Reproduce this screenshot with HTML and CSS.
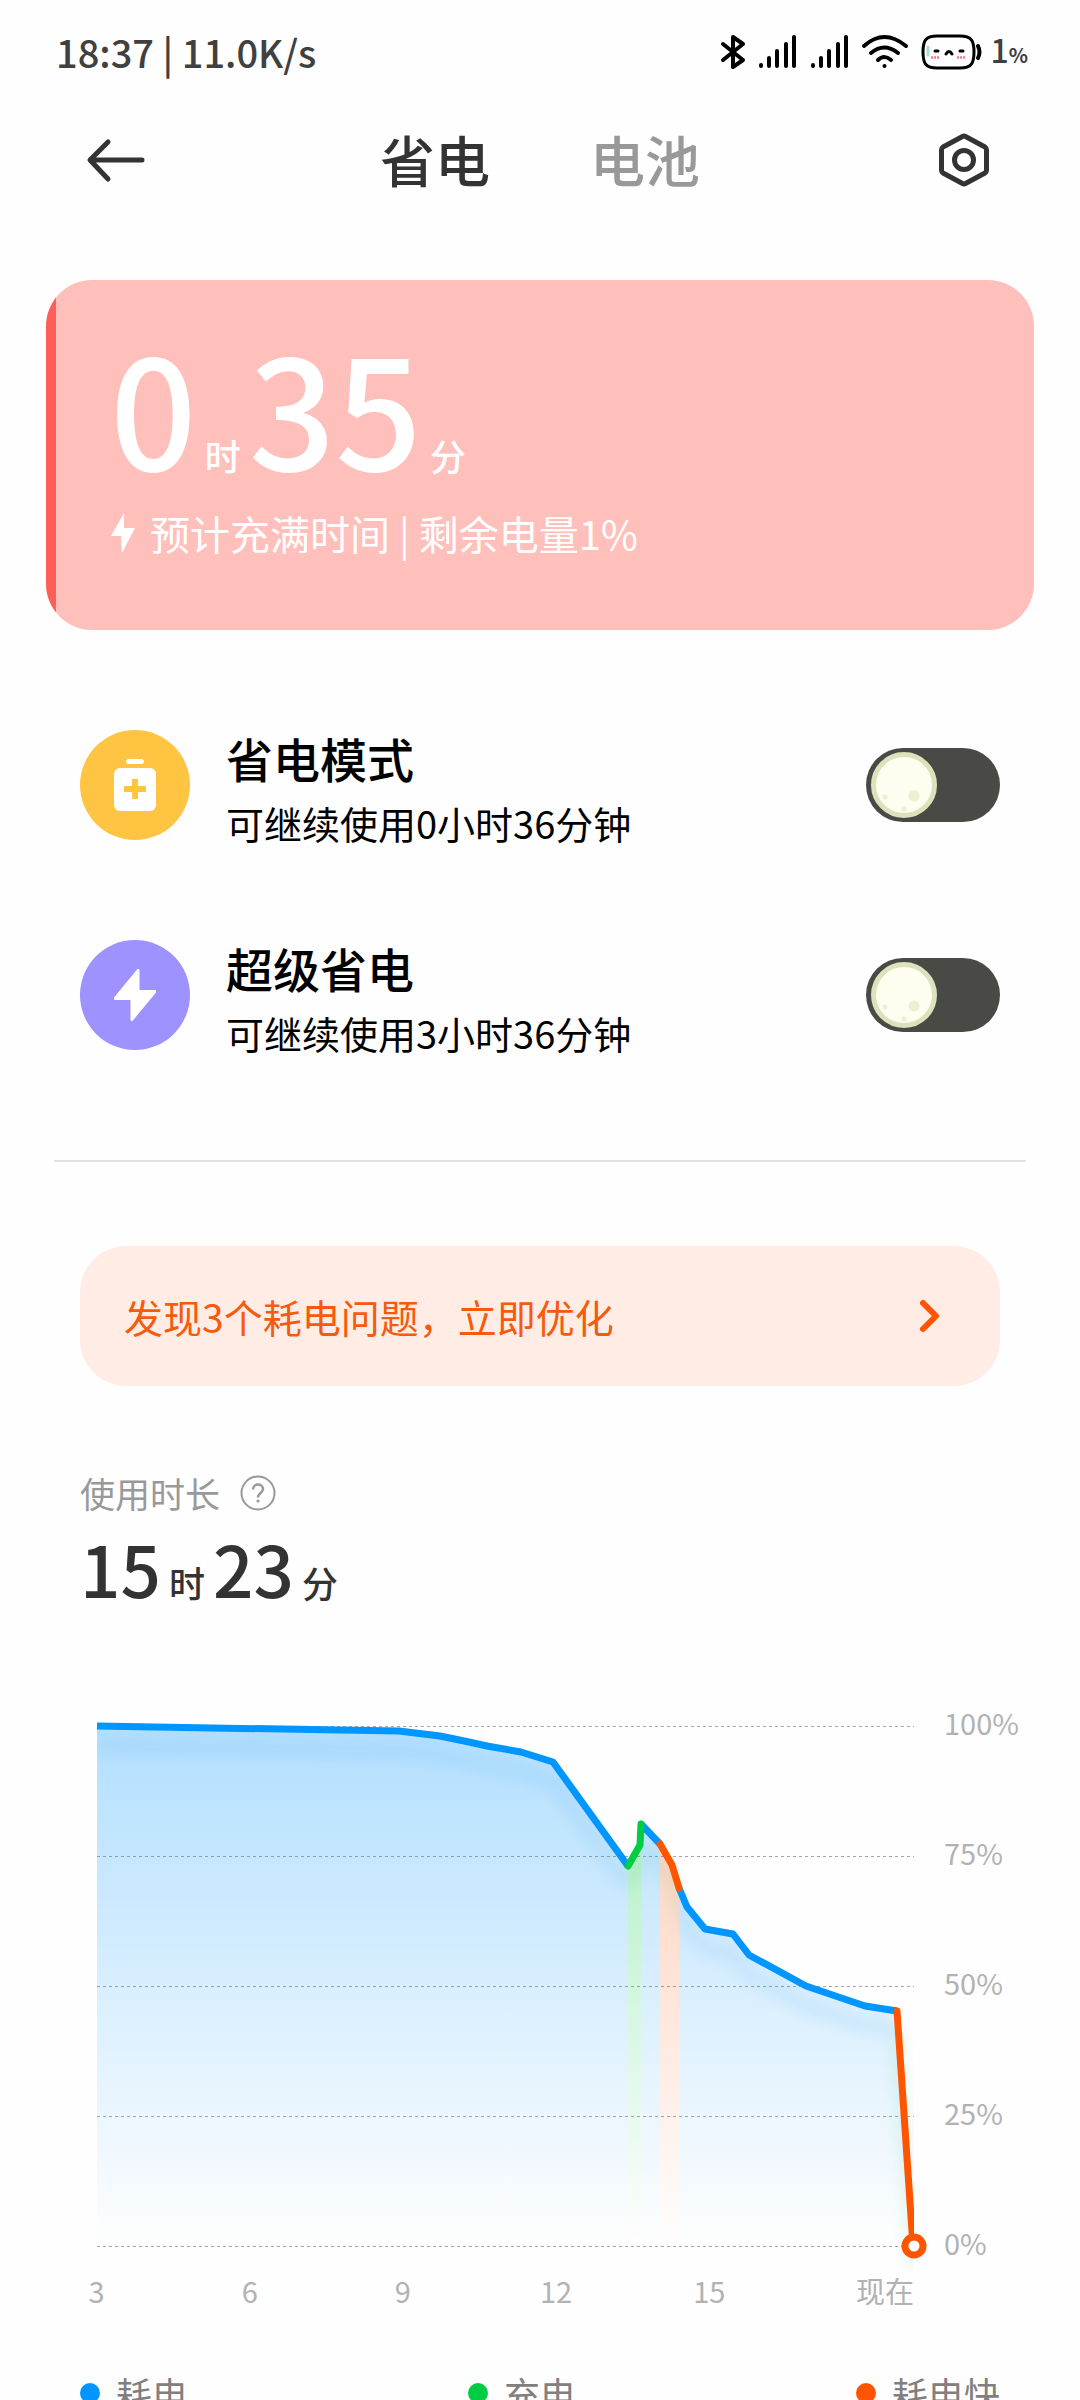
FILE: index.html
```html
<!DOCTYPE html>
<html lang="zh-CN">
<head>
<meta charset="utf-8">
<meta name="viewport" content="width=device-width, initial-scale=1">
<title>省电</title>
<link rel="stylesheet" href="styles.css">
</head>
<body>
<div class="screen">
  <div class="status">
    <span class="status-text">18:37 | 11.0K/s</span>
    <div class="status-icons">
      <svg width="26" height="36" viewBox="0 0 26 36" fill="none" stroke="#000" stroke-width="4" stroke-linecap="round" stroke-linejoin="round"><path d="M3 10 23 26 13 33V3L23 10 3 26"/></svg>
      <svg width="40" height="36" viewBox="0 0 40 36" stroke="#000" stroke-width="4" stroke-linecap="round"><path d="M3 31v1M11 24v8M19 17v15M28 10v22M36 3v29"/></svg>
      <svg width="40" height="36" viewBox="0 0 40 36" stroke="#000" stroke-width="4" stroke-linecap="round"><path d="M3 31v1M11 24v8M19 17v15M28 10v22M36 3v29"/></svg>
      <svg width="48" height="36" viewBox="0 0 48 36" fill="none" stroke="#000" stroke-width="4" stroke-linecap="round"><path d="M2 12Q22-6 44 12M9 19Q22 8 36 19M16 26Q22 20 29 26"/><circle cx="22.500" cy="32" r="2" fill="#000" stroke="none"/></svg>
      <div class="status-battery">
        <svg width="60" height="36" viewBox="0 0 60 36" fill="none" stroke="#000" stroke-linecap="round">
          <path d="M15 2H38C49 2 52 6 52 18S49 34 38 34H15C4 34 1 30 1 18S4 2 15 2Z" stroke-width="3"/>
          <path d="M56 12Q59 18 56 24" stroke-width="4"/>
          <path d="M13 17h3M38 17h3M24 20Q27 15 30 20" stroke-width="3"/>
          <path d="M6 13v8" stroke="#a9dcd8" stroke-width="3"/>
          <path d="M10 23v1M13 23v1M16 23v1M36 23v1M39 23v1M42 23v1" stroke="#ee7f86" stroke-width="2"/>
        </svg>
        <span>1<small>%</small></span>
      </div>
    </div>
  </div>

  <header class="header">
    <button class="icon-button" type="button" aria-label="返回">
      <svg width="72" height="72" viewBox="0 0 72 72" fill="none" stroke="#333" stroke-width="5" stroke-linecap="round" stroke-linejoin="round"><path d="M62 36H11M28 18 10 36 28 55"/></svg>
    </button>
    <nav class="tabs">
      <a class="tab tab-active" href="#saver">省电</a>
      <a class="tab" href="#battery">电池</a>
    </nav>
    <button class="icon-button" type="button" aria-label="设置">
      <svg width="72" height="72" viewBox="0 0 72 72" fill="none" stroke="#333" stroke-width="5" stroke-linejoin="round"><path d="M34.500 12.500Q36 11.500 37.500 12.500L57 23Q58.500 24 58.500 26V46Q58.500 48 57 49L37.500 59.500Q36 60.500 34.500 59.500L15 49Q13.500 48 13.500 46V26Q13.500 24 15 23Z"/><circle cx="36" cy="36" r="9.500"/></svg>
    </button>
  </header>

  <main>
    <section class="charge">
      <p class="charge-time"><b>0</b><span>时</span><b>35</b><span>分</span></p>
      <p class="charge-note">
        <svg width="26" height="40" viewBox="0 0 26 40" fill="#fff"><path d="M14 0 1 23H11L12 40 25 15H14Z"/></svg>
        <span>预计充满时间 | 剩余电量1%</span>
      </p>
    </section>

    <section class="modes" id="saver">
      <div class="mode">
        <svg class="mode-icon" width="110" height="110" viewBox="0 0 110 110"><circle cx="55" cy="55" r="55" fill="#ffc542"/><rect x="46" y="29" width="18" height="5" rx="2.500" fill="#fff"/><rect x="34" y="38" width="42" height="43" rx="6" fill="#fff"/><path d="M55 49v20M44 59h22" stroke="#ffc542" stroke-width="6"/></svg>
        <label class="mode-text" for="mode-saver"><span class="mode-title">省电模式</span><span class="mode-note">可继续使用0小时36分钟</span></label>
        <input class="toggle" type="checkbox" role="switch" id="mode-saver">
      </div>
      <div class="mode">
        <svg class="mode-icon" width="110" height="110" viewBox="0 0 110 110"><circle cx="55" cy="55" r="55" fill="#9d92ff"/><path d="M58 30 35 58V59H51.500V80H52L75 52V51H58.500V30Z" fill="#fff" stroke="#fff" stroke-width="2" stroke-linejoin="round"/></svg>
        <label class="mode-text" for="mode-super"><span class="mode-title">超级省电</span><span class="mode-note">可继续使用3小时36分钟</span></label>
        <input class="toggle" type="checkbox" role="switch" id="mode-super">
      </div>
    </section>

    <hr class="divider">

    <button class="issues" type="button">
      <span>发现3个耗电问题，立即优化</span>
      <svg width="22" height="34" viewBox="0 0 22 34" fill="none" stroke="#ff5500" stroke-width="6" stroke-linecap="round" stroke-linejoin="round"><path d="M5 4 18 17 5 30"/></svg>
    </button>

    <section class="usage" id="battery">
      <h2 class="usage-label">使用时长
        <svg width="36" height="36" viewBox="0 0 36 36" fill="none" stroke="#999" stroke-width="2"><circle cx="18" cy="18" r="16.500"/><path d="M13 14.500C13 8 23 8 23 14 23 18 18 18 18 22.500" stroke-width="2.500"/><circle cx="18" cy="26" r="1.600" fill="#999" stroke="none"/></svg>
      </h2>
      <p class="usage-time"><b>15</b><span>时</span><b>23</b><span>分</span></p>
    </section>

    <figure class="chart">
      <div class="chart-body">
        <svg class="plot" viewBox="0 0 817 520" role="img" aria-label="电量变化">
          <defs>
            <linearGradient id="fade-blue" gradientUnits="userSpaceOnUse" x1="0" y1="0" x2="0" y2="520"><stop stop-color="#0096ff" stop-opacity=".3"/><stop offset="1" stop-color="#0096ff" stop-opacity="0"/></linearGradient>
            <linearGradient id="fade-green" gradientUnits="userSpaceOnUse" x1="0" y1="0" x2="0" y2="520"><stop stop-color="#00cc44" stop-opacity=".35"/><stop offset="1" stop-color="#00cc44" stop-opacity="0"/></linearGradient>
            <linearGradient id="fade-orange" gradientUnits="userSpaceOnUse" x1="0" y1="0" x2="0" y2="520"><stop stop-color="#ff5500" stop-opacity=".3"/><stop offset="1" stop-color="#ff5500" stop-opacity="0"/></linearGradient>
            <clipPath id="plot-clip"><rect x="0" y="-10" width="817" height="570"/></clipPath>
            <filter id="soft" filterUnits="userSpaceOnUse" x="-40" y="-40" width="900" height="640"><feGaussianBlur stdDeviation="7"/></filter>
          </defs>
          <path fill="url(#fade-blue)" d="M0 0 302 5 343 10 372 16 390 20 424 26 456 36 531 140V520H0ZM544 98 563 118V520H544ZM582 162 590 181 608 203 636 208 652 229 709 260 768 280 800 285 816 520H582Z"/>
          <path fill="url(#fade-green)" d="M531 140 543 119 544 98V520H531Z"/>
          <path fill="url(#fade-orange)" d="M563 118 575 139 582 162V520H563Z"/>
          <g clip-path="url(#plot-clip)" fill="none" stroke-linejoin="round">
            <g filter="url(#soft)" stroke-width="14" opacity=".08">
              <path stroke="#0080e0" d="M0 20 302 25 343 30 372 36 390 40 424 46 456 56 531 160M544 118 563 138M582 182 590 201 608 223 636 228 652 249 709 280 768 300 800 305"/>
              <path stroke="#00aa44" d="M531 160 543 139 544 118M563 138 575 159 582 182M800 305 816 540"/>
            </g>
            <path stroke="#777" stroke-opacity=".65" stroke-dasharray="3 3" d="M0 .5H817M0 130.500H817M0 260.500H817M0 390.500H817M0 520.500H817"/>
            <g stroke-width="7">
              <path stroke="#0096ff" d="M0 0 302 5 343 10 372 16 390 20 424 26 456 36 531 140M544 98 563 118M582 162 590 181 608 203 636 208 652 229 709 260 768 280 800 285"/>
              <path stroke="#00cc44" stroke-linecap="round" d="M531 140 543 119 544 98"/>
              <path stroke="#ff5500" stroke-linecap="round" d="M563 118 575 139 582 162M800 285 816 520"/>
            </g>
          </g>
          <circle cx="817" cy="520" r="9" fill="#fff" stroke="#ff5500" stroke-width="7"/>
        </svg>
        <ul class="levels"><li>100%</li><li>75%</li><li>50%</li><li>25%</li><li>0%</li></ul>
      </div>
      <ul class="hours"><li>3</li><li>6</li><li>9</li><li>12</li><li>15</li><li>现在</li></ul>
      <figcaption class="legend">
        <span class="key key-drain">耗电</span>
        <span class="key key-charge">充电</span>
        <span class="key key-fast">耗电快</span>
      </figcaption>
    </figure>
  </main>
</div>
</body>
</html>
```
FILE: styles.css
```css
*, *::before { box-sizing: border-box; }

body, p, h2, ul, figure { margin: 0; padding: 0; }

body {
  background: #fefefe;
  color: #000;
  font-family: "Noto Sans CJK SC", sans-serif;
}

ul { list-style: none; }
svg { display: block; flex: none; overflow: visible; }

button {
  border: 0;
  padding: 0;
  background: none;
  font: inherit;
  cursor: pointer;
}

.screen {
  height: 100vh;
  overflow-y: auto;
  scrollbar-width: none;
}

/* Status bar */
.status {
  display: flex;
  align-items: center;
  justify-content: space-between;
  height: 104px;
  padding: 0 52px 0 56px;
  color: #404040;
  font-weight: 500;
}
.status-text { font-size: 38px; line-height: 48px; }
.status-icons { display: flex; align-items: center; gap: 12px; }
.status-battery {
  display: flex;
  align-items: center;
  gap: 8px;
  font-size: 32px;
  line-height: 48px;
}
.status-battery small { font-size: 20px; font-weight: 700; }

/* Header */
.header {
  display: flex;
  align-items: center;
  justify-content: space-between;
  height: 112px;
  padding: 0 80px;
}
.tabs { display: flex; gap: 100px; }
.tab {
  color: #999;
  font-size: 55px;
  font-weight: 500;
  line-height: 76px;
  padding-bottom: 4px;
  text-decoration: none;
}
.tab-active { color: #333; }

/* Charging card */
.charge {
  margin: 64px 46px 0;
  padding: 45px 64px 69px;
  border-radius: 46px;
  background: linear-gradient(to right, #ff5e57 1%, #ffbfbb 1%);
  color: #fff;
}
.charge-time {
  display: flex;
  align-items: baseline;
  gap: 8px;
  font-size: 36px;
  font-weight: 500;
}
.charge-time b { font-size: 152px; font-weight: 500; line-height: 160px; }
.charge-time span, .usage-time span { line-height: 36px; }
.charge-note {
  display: flex;
  align-items: center;
  gap: 14px;
  margin-top: 20px;
  font-size: 40px;
  line-height: 56px;
}

/* Power modes */
.modes { padding: 50px 80px 0; }
.mode {
  display: flex;
  align-items: center;
  gap: 36px;
  height: 210px;
}
.mode-text {
  display: flex;
  flex: 1;
  flex-direction: column;
  padding-top: 6px;
}
.mode-title { font-size: 47px; font-weight: 500; line-height: 70px; }
.mode-note { font-size: 38px; line-height: 60px; }

.toggle {
  appearance: none;
  display: flex;
  align-items: center;
  width: 134px;
  height: 74px;
  margin: 0;
  padding: 0 5px;
  border-radius: 37px;
  background: #494a45;
}
.toggle::before {
  content: "";
  width: 66px;
  height: 66px;
  border: 5px solid #dce2bc;
  border-radius: 50%;
  background:
    radial-gradient(circle at 38px 39px, #eeeed0 5px, transparent 6px),
    radial-gradient(circle at 9px 40px, #eeeed0 2px, transparent 3px),
    radial-gradient(circle at 28px 52px, #eeeed0 2px, transparent 3px),
    #fffdf0;
}
.toggle:checked { justify-content: flex-end; }

.divider {
  margin: 60px 54px 84px;
  border: 0;
  border-top: 2px solid #e2e2e2;
}

/* Issue banner */
.issues {
  display: flex;
  align-items: center;
  justify-content: space-between;
  width: calc(100% - 160px);
  height: 140px;
  margin: 0 80px;
  padding: 0 60px 0 44px;
  border-radius: 46px;
  background: #ffede5;
  color: #f65a0c;
  font-size: 39px;
}

/* Usage time */
.usage { padding: 82px 80px 0; }
.usage-label {
  display: flex;
  align-items: center;
  gap: 20px;
  color: #999;
  font-size: 35px;
  font-weight: 400;
  line-height: 50px;
}
.usage-time {
  display: flex;
  align-items: baseline;
  gap: 8px;
  margin-top: 4px;
  color: #333;
  font-size: 36px;
  font-weight: 500;
}
.usage-time b { font-size: 71px; font-weight: 500; line-height: 90px; }

/* Battery chart */
.chart { margin-top: 90px; }
.chart-body {
  display: flex;
  gap: 30px;
  padding: 0 32px 0 97px;
}
.plot { flex: 1; min-width: 0; height: auto; padding: 24px 0 16px; }
.levels {
  display: flex;
  flex: none;
  flex-direction: column;
  justify-content: space-between;
  width: 104px;
}
.levels, .hours { color: #b2b2b2; font-size: 29px; line-height: 40px; }
.hours {
  display: grid;
  grid-template-columns: repeat(5, 153fr) 128fr;
  margin: 8px 166px 0 20px;
  text-align: center;
}
.hours li:last-child { text-align: right; }

.legend {
  display: grid;
  grid-template-columns: 388fr 388fr 144fr;
  padding: 56px 80px 0;
  color: #808080;
  font-size: 36px;
  line-height: 54px;
}
.key { display: flex; align-items: center; gap: 16px; white-space: nowrap; }
.key::before {
  content: "";
  width: 20px;
  height: 20px;
  border-radius: 50%;
}
.key-drain::before { background: #0096ff; }
.key-charge::before { background: #00cc44; }
.key-fast::before { background: #ff5500; }
```
